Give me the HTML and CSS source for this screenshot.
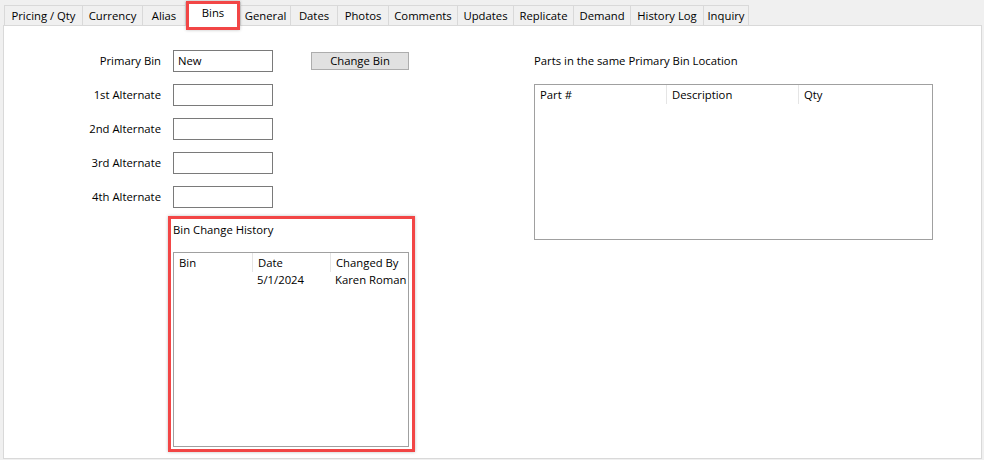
FILE: index.html
```html
<!DOCTYPE html>
<html>
<head>
<meta charset="utf-8">
<link rel="stylesheet" href="styles.css">
</head>
<body>
<div class="tabs">
  <div class="tab t-pricing">Pricing / Qty</div>
  <div class="tab t-currency">Currency</div>
  <div class="tab t-alias">Alias</div>
  <div class="tab t-bins active">Bins<span class="mark"></span></div>
  <div class="tab t-general">General</div>
  <div class="tab t-dates">Dates</div>
  <div class="tab t-photos">Photos</div>
  <div class="tab t-comments">Comments</div>
  <div class="tab t-updates">Updates</div>
  <div class="tab t-replicate">Replicate</div>
  <div class="tab t-demand">Demand</div>
  <div class="tab t-history">History Log</div>
  <div class="tab t-inquiry last">Inquiry</div>
</div>
<div class="panel">
  <div class="left">
    <div class="form">
      <label class="lbl">Primary Bin</label>
      <div class="field">New</div>
      <button class="btn">Change Bin</button>
      <label class="lbl">1st Alternate</label>
      <div class="field"></div>
      <span></span>
      <label class="lbl">2nd Alternate</label>
      <div class="field"></div>
      <span></span>
      <label class="lbl">3rd Alternate</label>
      <div class="field"></div>
      <span></span>
      <label class="lbl">4th Alternate</label>
      <div class="field"></div>
      <span></span>
    </div>
    <div class="highlight">
      <div class="caption">Bin Change History</div>
      <div class="list hist">
        <div class="row head">
          <div class="c h1">Bin</div>
          <div class="c h2">Date</div>
          <div class="c h3">Changed By</div>
        </div>
        <div class="row data">
          <div class="c h1"></div>
          <div class="c h2">5/1/2024</div>
          <div class="c h3">Karen Roman</div>
        </div>
      </div>
    </div>
  </div>
  <div class="right">
    <div class="caption">Parts in the same Primary Bin Location</div>
    <div class="list parts">
      <div class="row head">
        <div class="c p1">Part #</div>
        <div class="c p2">Description</div>
        <div class="c p3">Qty</div>
      </div>
    </div>
  </div>
</div>
</body>
</html>
```
FILE: styles.css
```css
* { box-sizing: border-box; }
html, body { margin: 0; padding: 0; }
body {
  width: 984px;
  height: 460px;
  background: #f0f0f0;
  font-family: "Open Sans", "Noto Sans", sans-serif;
  font-size: 11.3px;
  color: #000;
  overflow: hidden;
}
.tabs {
  display: flex;
  align-items: flex-end;
  height: 25px;
  padding-left: 4px;
  position: relative;
  z-index: 2;
}
.tab {
  height: 20px;
  line-height: 20px;
  text-align: center;
  border-top: 1px solid #d9d9d9;
  border-left: 1px solid #d9d9d9;
  background: #f0f0f0;
  white-space: nowrap;
}
.tab.last { border-right: 1px solid #d9d9d9; }
.tab.active {
  position: relative;
  height: 24px;
  line-height: 20px;
  margin-bottom: -1px;
  background: #fff;
  border-right: 1px solid #d9d9d9;
}
.tab.active + .tab { border-left: none; }
.mark {
  position: absolute;
  left: 0;
  right: 0;
  top: -2px;
  height: 29px;
  border: 3px solid #f24646;
  box-shadow: 0 0 3px rgba(0,0,0,0.25);
}
.t-pricing { width: 78px; }
.t-currency { width: 60px; }
.t-alias { width: 43px; }
.t-bins { width: 56px; }
.t-general { width: 49px; }
.t-dates { width: 47px; }
.t-photos { width: 51px; }
.t-comments { width: 69px; }
.t-updates { width: 56px; }
.t-replicate { width: 60px; }
.t-demand { width: 57px; }
.t-history { width: 73px; }
.t-inquiry { width: 46px; }

.panel {
  margin: 0 2px 0 3px;
  height: 434px;
  background: #fff;
  border: 1px solid #d9d9d9;
  display: flex;
}
.left { width: 411px; }
.form {
  margin-top: 24px;
  display: grid;
  grid-template-columns: 157px 100px 98px;
  grid-auto-rows: 22px;
  column-gap: 12px;
  row-gap: 12px;
}
.lbl {
  text-align: right;
  line-height: 22px;
  white-space: nowrap;
}
.field {
  border: 1px solid #7a7a7a;
  background: #fff;
  padding-left: 4px;
  line-height: 20px;
}
.btn {
  margin-left: 26px;
  width: 98px;
  height: 18px;
  align-self: center;
  background: #e1e1e1;
  border: 1px solid #adadad;
  font: inherit;
  color: #000;
  padding: 0;
  line-height: 16px;
}
.highlight {
  margin: 8px 0 0 164px;
  width: 247px;
  height: 236px;
  border: 3px solid #f24646;
  box-shadow: 0 0 3px rgba(0,0,0,0.25);
  padding: 3px 3px 2px 2px;
}
.caption {
  line-height: 16px;
  white-space: nowrap;
}
.list {
  border: 1px solid #a0a0a0;
  background: #fff;
}
.hist {
  margin-top: 14px;
  height: 195px;
}
.row { display: flex; }
.row.head { height: 19px; line-height: 19px; }
.row.data { height: 16px; line-height: 16px; }
.c {
  padding-left: 5px;
  white-space: nowrap;
}
.head .c + .c { border-left: 1px solid #e5e5e5; }
.data .c + .c { padding-left: 5px; }
.h1 { width: 78px; }
.h2 { width: 78px; }
.h3 { flex: 1; }
.right {
  margin-left: 119px;
  padding-top: 27px;
}
.parts {
  margin-top: 15px;
  width: 399px;
  height: 156px;
}
.p1 { width: 131px; }
.p2 { width: 132px; }
.p3 { flex: 1; }
```
